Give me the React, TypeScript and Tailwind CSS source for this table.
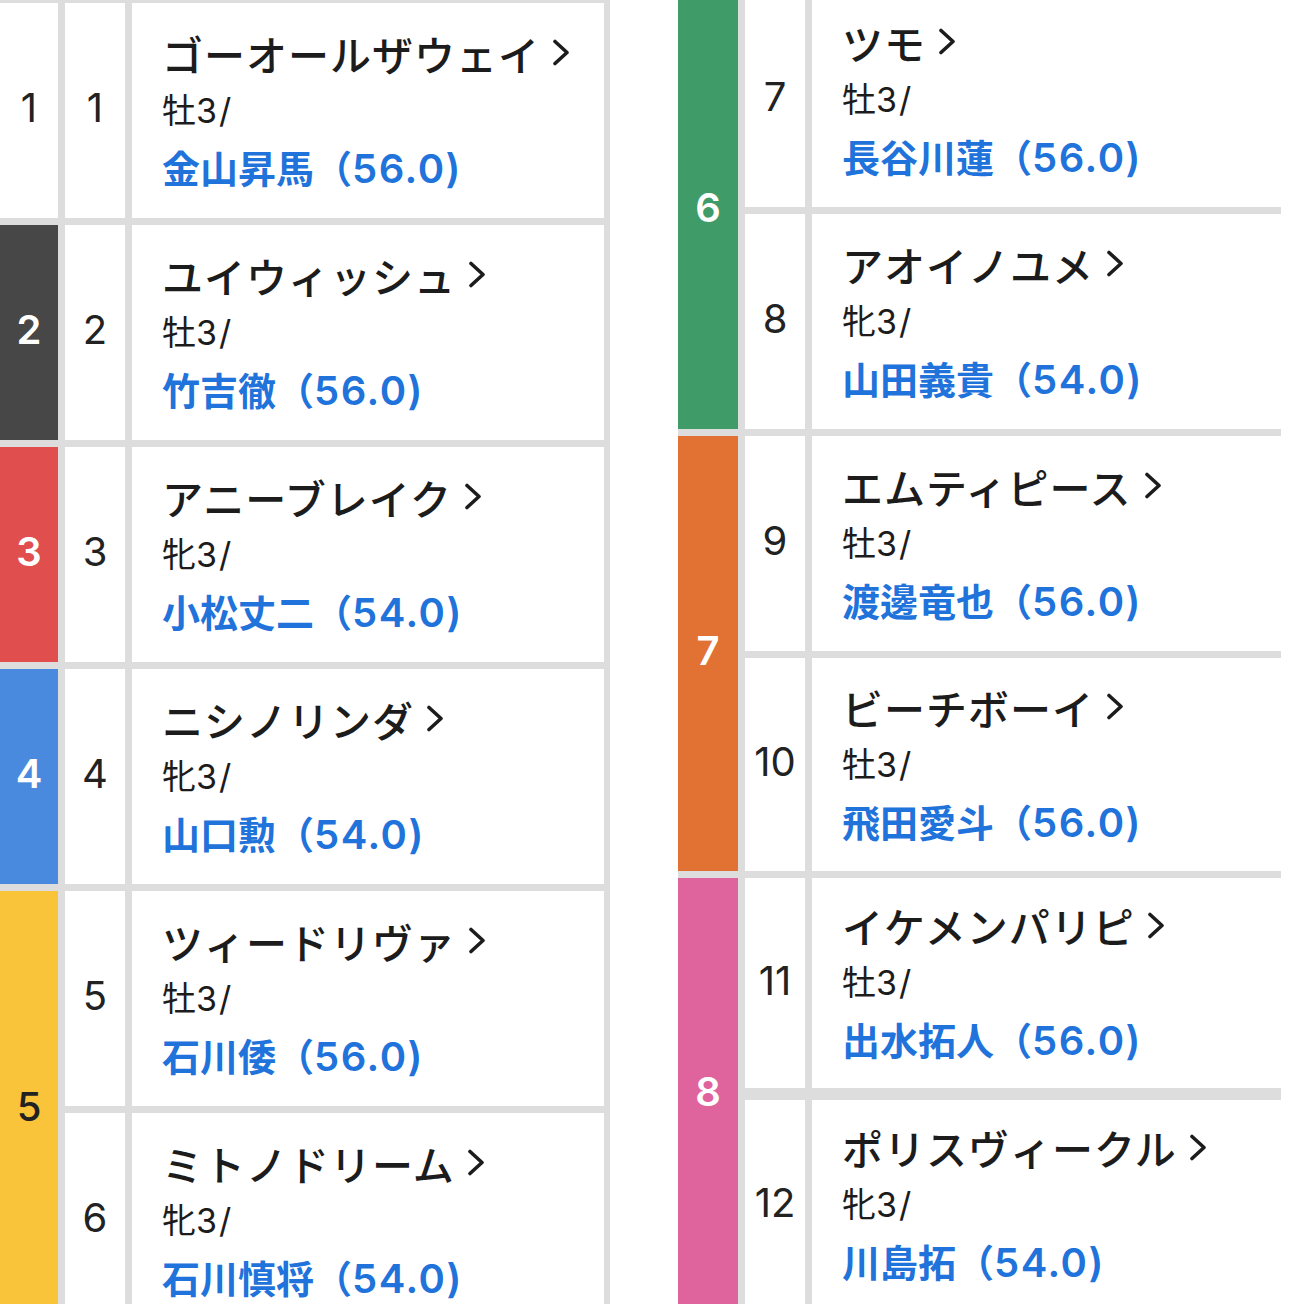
type Horse = {
  no: number;
  name: string;
  sex: string;
  jockey: string;
  weight: string;
};

type Gate = {
  no: number;
  bg: string;
  fg: string;
  horses: Horse[];
};

const LEFT: Gate[] = [
  {
    no: 1,
    bg: "bg-white",
    fg: "text-[#222222] font-normal",
    horses: [{ no: 1, name: "ゴーオールザウェイ", sex: "牡3/", jockey: "金山昇馬", weight: "56.0" }],
  },
  {
    no: 2,
    bg: "bg-[#474747]",
    fg: "text-white font-semibold",
    horses: [{ no: 2, name: "ユイウィッシュ", sex: "牡3/", jockey: "竹吉徹", weight: "56.0" }],
  },
  {
    no: 3,
    bg: "bg-[#e04e4e]",
    fg: "text-white font-semibold",
    horses: [{ no: 3, name: "アニーブレイク", sex: "牝3/", jockey: "小松丈二", weight: "54.0" }],
  },
  {
    no: 4,
    bg: "bg-[#4a8ade]",
    fg: "text-white font-semibold",
    horses: [{ no: 4, name: "ニシノリンダ", sex: "牝3/", jockey: "山口勲", weight: "54.0" }],
  },
  {
    no: 5,
    bg: "bg-[#f9c33a]",
    fg: "text-[#222222] font-medium",
    horses: [
      { no: 5, name: "ツィードリヴァ", sex: "牡3/", jockey: "石川倭", weight: "56.0" },
      { no: 6, name: "ミトノドリーム", sex: "牝3/", jockey: "石川慎将", weight: "54.0" },
    ],
  },
];

const RIGHT: Gate[] = [
  {
    no: 6,
    bg: "bg-[#3f9c68]",
    fg: "text-white font-semibold",
    horses: [
      { no: 7, name: "ツモ", sex: "牡3/", jockey: "長谷川蓮", weight: "56.0" },
      { no: 8, name: "アオイノユメ", sex: "牝3/", jockey: "山田義貴", weight: "54.0" },
    ],
  },
  {
    no: 7,
    bg: "bg-[#e27134]",
    fg: "text-white font-semibold",
    horses: [
      { no: 9, name: "エムティピース", sex: "牡3/", jockey: "渡邊竜也", weight: "56.0" },
      { no: 10, name: "ビーチボーイ", sex: "牡3/", jockey: "飛田愛斗", weight: "56.0" },
    ],
  },
  {
    no: 8,
    bg: "bg-[#df649e]",
    fg: "text-white font-semibold",
    horses: [
      { no: 11, name: "イケメンパリピ", sex: "牡3/", jockey: "出水拓人", weight: "56.0" },
      { no: 12, name: "ポリスヴィークル", sex: "牝3/", jockey: "川島拓", weight: "54.0" },
    ],
  },
];

// latin digits are set in Inter, closer to the wide round digits of the original
const latin = "font-['Inter','Noto_Sans_CJK_JP',sans-serif]";

function Chevron() {
  return (
    <svg width="18" height="27" viewBox="0 0 18 27" className="ml-[12px] shrink-0">
      <polyline
        points="3,2.5 15,13.5 3,24.5"
        fill="none"
        stroke="#1c1c1c"
        strokeWidth="3.6"
        strokeLinecap="round"
        strokeLinejoin="round"
      />
    </svg>
  );
}

function HorseCells({ horse, extra }: { horse: Horse; extra?: string }) {
  const sexMark = horse.sex.slice(0, 1);
  const age = horse.sex.slice(1);
  return (
    <>
      <div
        className={`col-start-2 bg-white flex items-center justify-center pb-[5px] text-[40px] text-[#222222] ${latin} ${extra ?? ""}`}
      >
        {horse.no}
      </div>
      <div className={`col-start-3 bg-white flex flex-col justify-center pl-[30px] ${extra ?? ""}`}>
        <div className="flex items-center text-[41px] leading-[56px] tracking-[1px] font-medium text-[#1c1c1c] whitespace-nowrap">
          <span>{horse.name}</span>
          <Chevron />
        </div>
        <div className="text-[34px] leading-[56px] text-[#1c1c1c]">
          {sexMark}
          <span className={`${latin} tracking-[2px]`}>{age}</span>
        </div>
        <div className="text-[38px] leading-[56px] font-semibold text-[#1f73da] whitespace-nowrap">
          {horse.jockey}（<span className={`${latin} text-[40px] tracking-[1.5px]`}>{horse.weight})</span>
        </div>
      </div>
    </>
  );
}

function GateCell({ gate }: { gate: Gate }) {
  return (
    <div
      className={`col-start-1 flex items-center justify-center pb-[5px] text-[40px] ${latin} ${gate.bg} ${gate.fg} ${
        gate.horses.length === 2 ? "row-span-2" : ""
      }`}
    >
      {gate.no}
    </div>
  );
}

export default function App() {
  return (
    <div
      className="h-[1304px] w-[1304px] overflow-hidden bg-white flex items-start"
      style={{ fontFamily: '"Noto Sans CJK JP", "Noto Sans", sans-serif' }}
    >
      <div className="grid grid-cols-[58px_60px_472px] auto-rows-[215px] gap-[7px] bg-[#dddddd] pt-[3px] pr-[6px]">
        {LEFT.map((g) => (
          <div key={g.no} className="contents">
            <GateCell gate={g} />
            {g.horses.map((h) => (
              <HorseCells key={h.no} horse={h} />
            ))}
          </div>
        ))}
      </div>

      <div className="ml-[68px] -mt-[8px] grid grid-cols-[60px_60px_469px] grid-rows-[215px_215px_215px_213px_210px_215px] gap-[7px] bg-[#dddddd]">
        {RIGHT.map((g) => (
          <div key={g.no} className="contents">
            <GateCell gate={g} />
            {g.horses.map((h) => (
              <HorseCells key={h.no} horse={h} extra={h.no === 12 ? "mt-[5px]" : ""} />
            ))}
          </div>
        ))}
      </div>
    </div>
  );
}
